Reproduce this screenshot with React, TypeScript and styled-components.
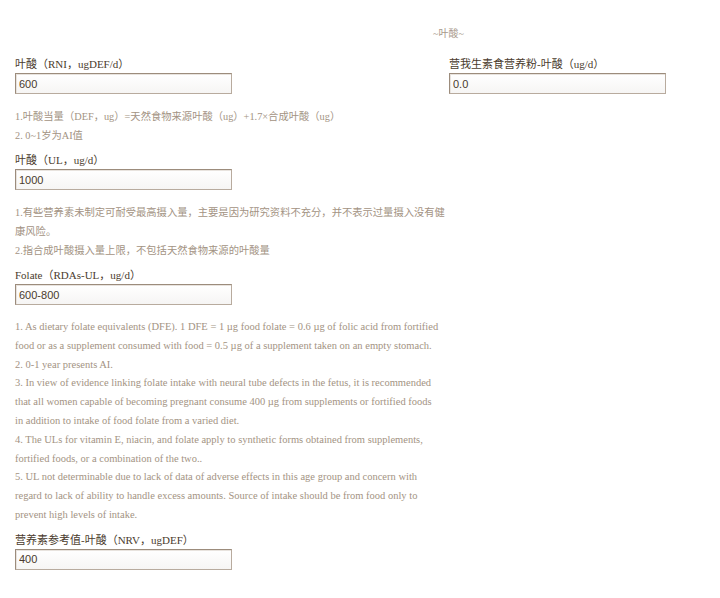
import styled, { createGlobalStyle } from 'styled-components'

/*---> Data <---*/
const rniNotes = [
  '1.叶酸当量（DEF，ug）=天然食物来源叶酸（ug）+1.7×合成叶酸（ug）',
  '2. 0~1岁为AI值',
]

const ulNotes = [
  '1.有些营养素未制定可耐受最高摄入量，主要是因为研究资料不充分，并不表示过量摄入没有健康风险。',
  '2.指合成叶酸摄入量上限，不包括天然食物来源的叶酸量',
]

// each note is kept as its printed lines
const rdaNotes = [
  [
    '1. As dietary folate equivalents (DFE). 1 DFE = 1 µg food folate = 0.6 µg of folic acid from fortified',
    'food or as a supplement consumed with food = 0.5 µg of a supplement taken on an empty stomach.',
  ],
  ['2. 0-1 year presents AI.'],
  [
    '3. In view of evidence linking folate intake with neural tube defects in the fetus, it is recommended',
    'that all women capable of becoming pregnant consume 400 µg from supplements or fortified foods',
    'in addition to intake of food folate from a varied diet.',
  ],
  [
    '4. The ULs for vitamin E, niacin, and folate apply to synthetic forms obtained from supplements,',
    'fortified foods, or a combination of the two..',
  ],
  [
    '5. UL not determinable due to lack of data of adverse effects in this age group and concern with',
    'regard to lack of ability to handle excess amounts. Source of intake should be from food only to',
    'prevent high levels of intake.',
  ],
]

/*---> Components <---*/
const Field = ({ label, value }: { label: string; value: string }) => (
  <FieldWrapper>
    <Label>{label}</Label>
    <ValueInput type='text' defaultValue={value} readOnly />
  </FieldWrapper>
)

const App = () => {
  return (
    <>
      <GlobalStyle />
      <Page>
        <Title>~叶酸~</Title>
        <TopRow>
          <LeftColumn>
            <Field label='叶酸（RNI，ugDEF/d）' value='600' />
          </LeftColumn>
          <Field label='营我生素食营养粉-叶酸（ug/d）' value='0.0' />
        </TopRow>
        <Notes>
          {rniNotes.map((note) => (
            <li key={note}>{note}</li>
          ))}
        </Notes>
        <Field label='叶酸（UL，ug/d）' value='1000' />
        <Notes>
          {ulNotes.map((note) => (
            <li key={note}>{note}</li>
          ))}
        </Notes>
        <Field label='Folate（RDAs-UL，ug/d）' value='600-800' />
        <EnglishNotes>
          {rdaNotes.map((lines) => (
            <li key={lines[0]}>
              {lines.map((line) => (
                <NoteLine key={line}>{line}</NoteLine>
              ))}
            </li>
          ))}
        </EnglishNotes>
        <Field label='营养素参考值-叶酸（NRV，ugDEF）' value='400' />
      </Page>
    </>
  )
}

/*---> Styles <---*/
const GlobalStyle = createGlobalStyle`
  body {
    margin: 0;
    background: #ffffff;
    font-family: 'Liberation Serif', 'Noto Sans CJK SC', serif;
  }
`

const Page = styled.div`
  padding: 26px 15px 20px;
  width: 720px;
  box-sizing: border-box;
`

const Title = styled.div`
  padding-left: 418px;
  font-size: 10px;
  line-height: 16px;
  color: #a89a8c;
  margin-bottom: 14px;
`

const TopRow = styled.div`
  display: flex;
`

const LeftColumn = styled.div`
  width: 434px;
`

const FieldWrapper = styled.div`
  display: flex;
  flex-direction: column;
  align-items: flex-start;
`

const Label = styled.div`
  font-size: 11px;
  line-height: 16px;
  color: #4a3b2d;
  margin-bottom: 1px;
`

const ValueInput = styled.input`
  width: 217px;
  height: 21px;
  box-sizing: border-box;
  margin: 0;
  padding: 0 3px;
  border: 1px solid #b8ab9e;
  border-top-color: #9c8c7c;
  border-left-color: #9c8c7c;
  background: linear-gradient(#ffffff, #f6f5f4);
  box-shadow: inset 1px 1px 0 #e8e3de;
  font-family: 'Liberation Sans', Arial, sans-serif;
  font-size: 11px;
  color: #4a3a2c;
  outline: none;
`

const Notes = styled.ul`
  list-style: none;
  margin: 13px 0 7px;
  padding: 0;
  max-width: 440px;
  font-size: 10.3px;
  line-height: 19px;
  color: #a39383;
`

const EnglishNotes = styled(Notes)`
  max-width: none;
  font-size: 10.5px;
  line-height: 18.8px;
`

const NoteLine = styled.span`
  display: block;
  white-space: nowrap;
`

export default App
